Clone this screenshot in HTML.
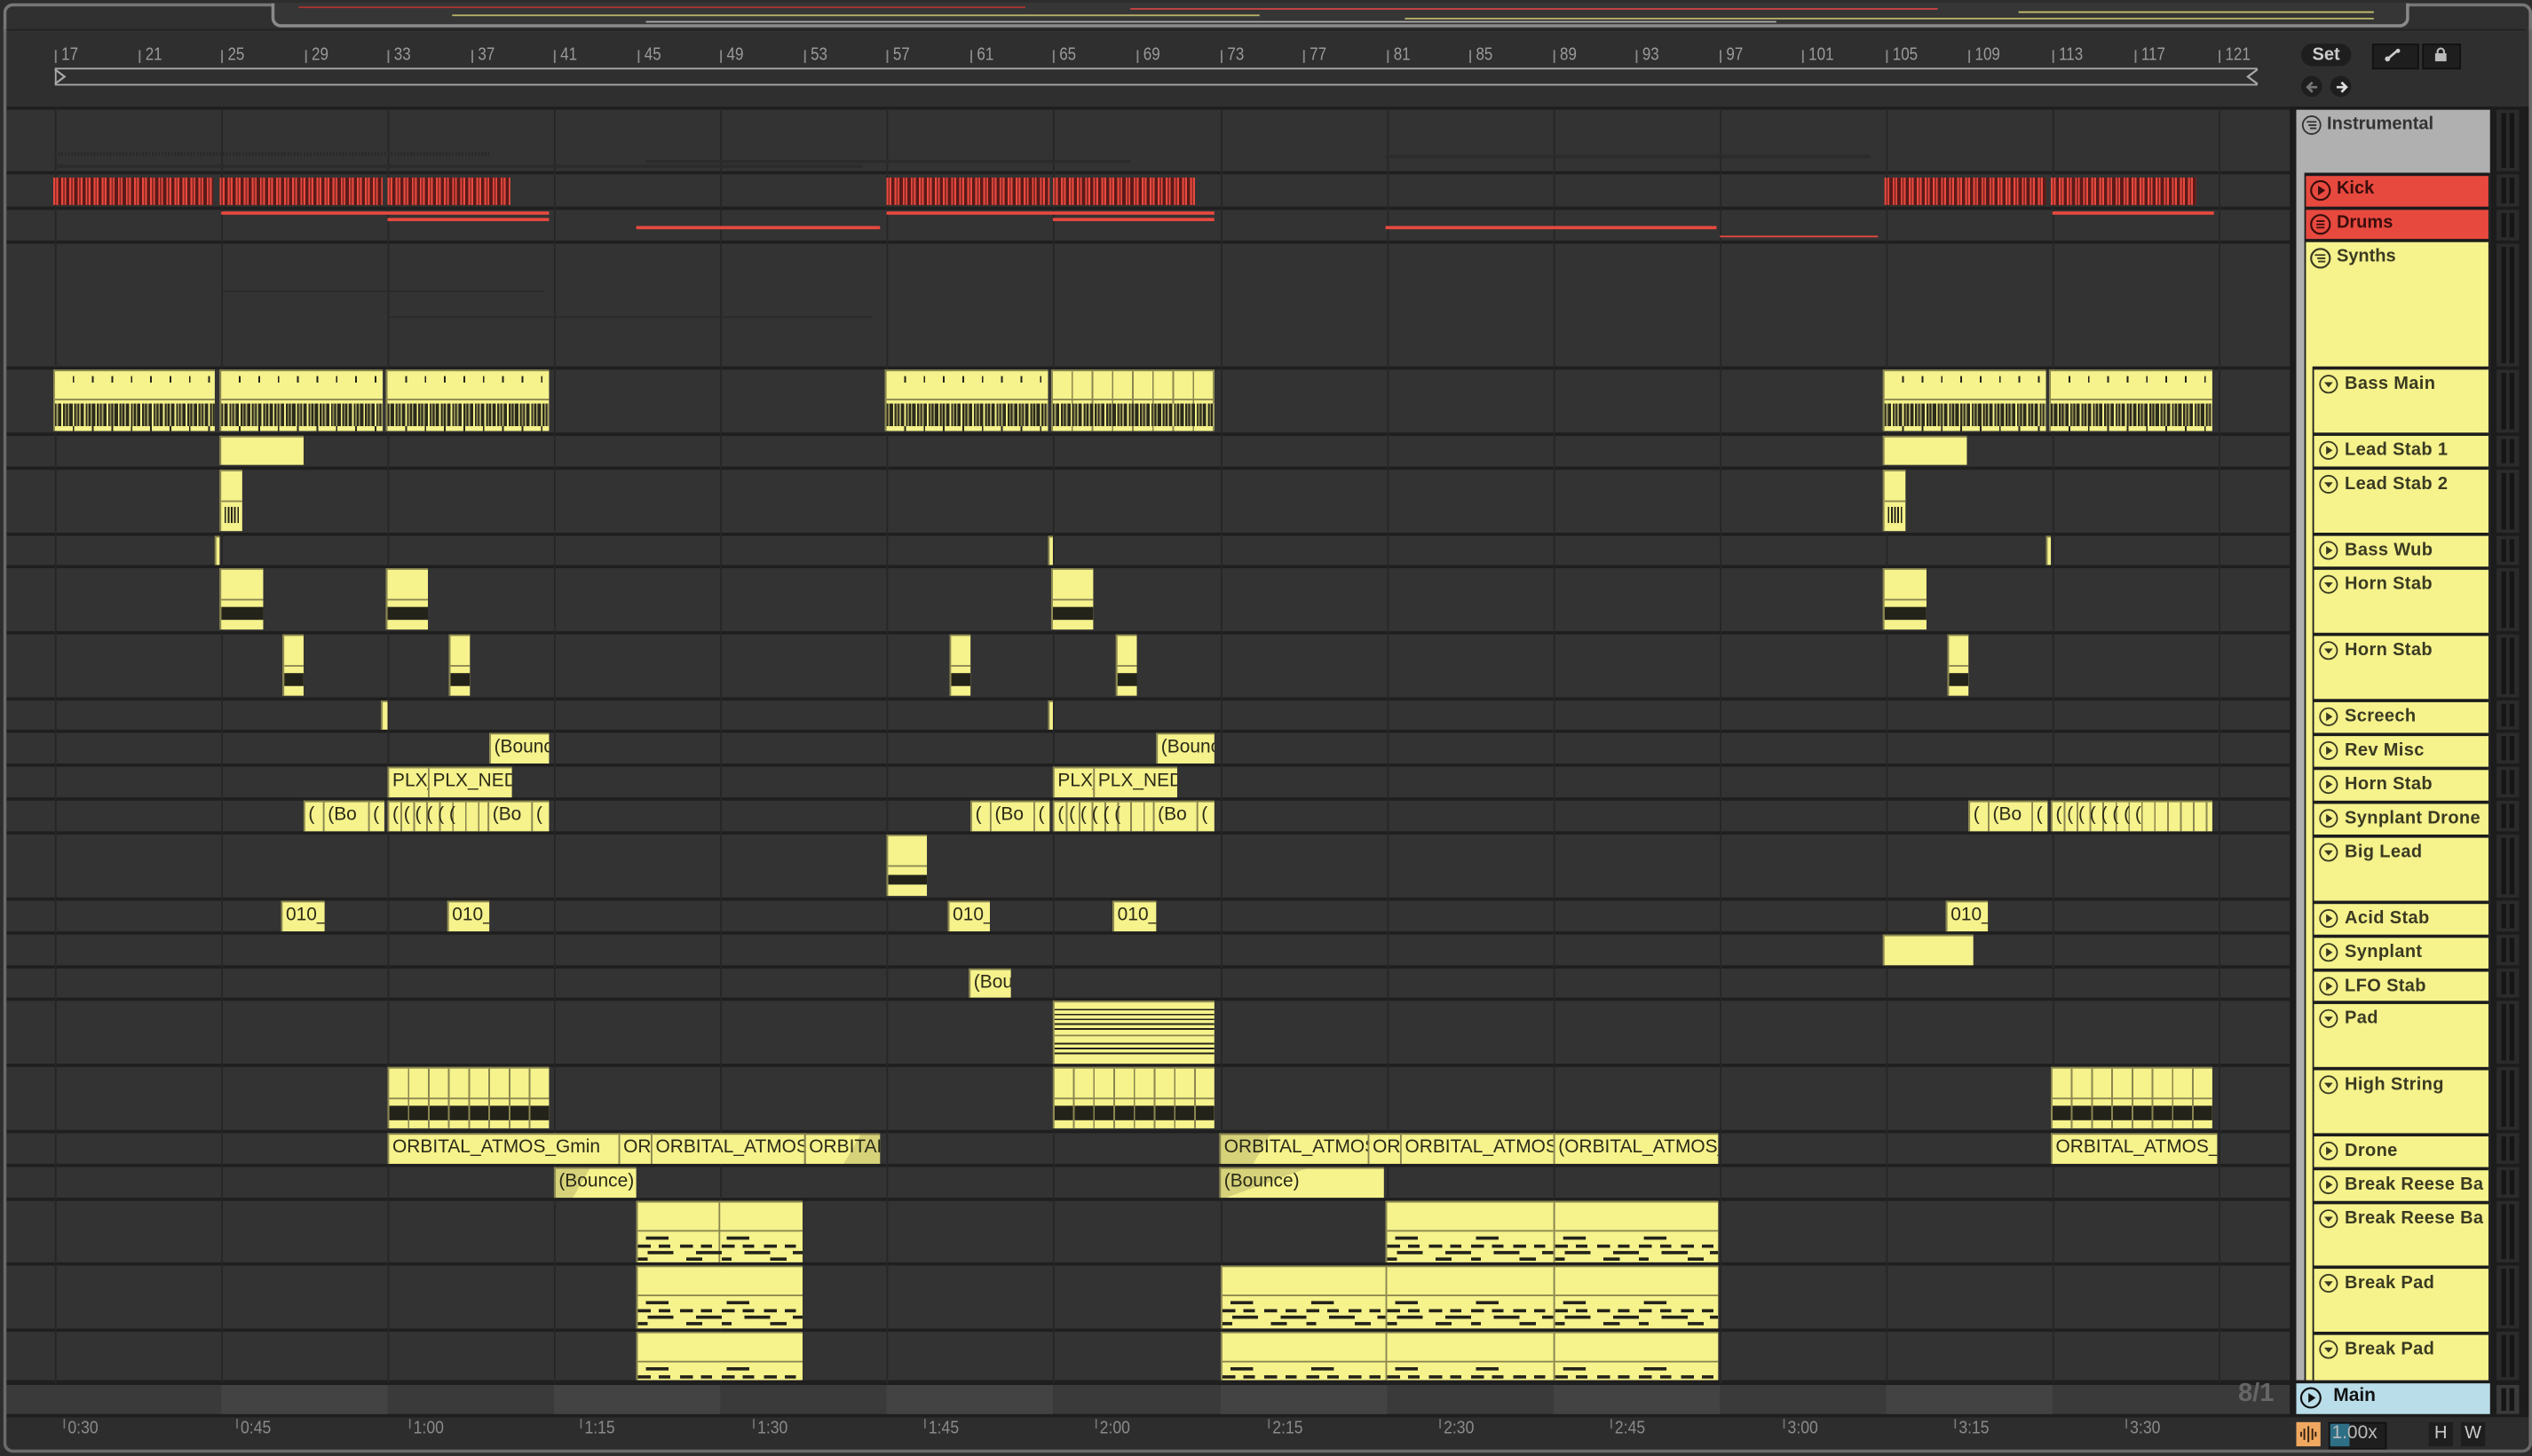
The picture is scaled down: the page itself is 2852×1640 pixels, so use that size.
<!DOCTYPE html>
<html><head><meta charset="utf-8"><style>
html,body{margin:0;padding:0;background:#2a2a2a;overflow:hidden}
#s{position:absolute;left:0;top:0;width:1568px;height:902px;transform:scale(1.8189,1.8182);transform-origin:0 0;background:#2d2d2d;font-family:"Liberation Sans",sans-serif;overflow:hidden}
.a{position:absolute}
.row{position:absolute;left:4px;width:1414px;background:#333}
.g{position:absolute;top:67px;width:1px;height:790px;background:#262626}
.rn{position:absolute;top:28px;font-size:11px;color:#9a9a9a;transform:scaleX(.85);transform-origin:0 0}
.rt{position:absolute;top:31px;width:1px;height:8px;background:#888}
.c{position:absolute;background:#f6f28c;border-left:1px solid #8a8650;border-top:1px solid #8a8650;box-sizing:border-box;overflow:hidden;white-space:nowrap;font-size:11.5px;color:#2a2a18;line-height:17px;padding-left:2px}
.k{position:absolute;background:repeating-linear-gradient(90deg,#e8493f 0 1px,#8a2a24 1px 2px,#e8493f 2px 3px,#5a1a18 3px 5px);}
.rl{position:absolute;height:2px;background:#e8493f}
.bm{position:absolute;left:0;right:0;top:20px;height:14px;background:repeating-linear-gradient(90deg,#2a2a1a 0 1px,#a8a468 1px 2px,#2a2a1a 2px 4px,#f6f28c 4px 5px,#2a2a1a 5px 6px,#8a8650 6px 7px)}
.dv{position:absolute;left:0;right:0;height:1px;background:#8a8650}
.bk{position:absolute;left:0;right:0;background:#23231a}
.tk{position:absolute;left:0;right:0;height:4px;background:repeating-linear-gradient(90deg,transparent 0 11px,#23231a 11px 12px)}
.nm{position:absolute;left:1433px;width:108px;background:#f6f28c;border-top:2px solid #1c1c1c;box-sizing:border-box;font-weight:bold;font-size:11px;color:#3a3a22;padding:3px 0 0 19px;letter-spacing:.2px}
.ic{position:absolute;left:3px;top:3px;width:12px;height:12px}
.m{position:absolute;left:1546px;width:14px;background:#2b2b2b}
.m:before,.m:after{content:"";position:absolute;top:2px;bottom:2px;width:3px;background:#161616}
.m:before{left:3px}.m:after{left:8px}
.tl{position:absolute;top:879px;font-size:11px;color:#8a8a8a;transform:scaleX(.88);transform-origin:0 0}
.tl:before{content:"";position:absolute;left:-3px;top:0;width:1px;height:6px;background:#777}
.notes{position:absolute;left:0;right:0;bottom:0;background:
linear-gradient(#23231a,#23231a) 5px 3px/14px 2px no-repeat,
linear-gradient(#23231a,#23231a) 55px 3px/14px 2px no-repeat,
repeating-linear-gradient(90deg,#23231a 0 8px,transparent 8px 13px,#23231a 13px 20px,transparent 20px 26px) 0 8px/100% 2px no-repeat,
repeating-linear-gradient(90deg,transparent 0 6px,#23231a 6px 22px,transparent 22px 30px) 0 12px/100% 2px no-repeat,
repeating-linear-gradient(90deg,#23231a 0 6px,transparent 6px 30px,#23231a 30px 40px,transparent 40px 52px) 0 16px/100% 2px no-repeat,
repeating-linear-gradient(90deg,#23231a 0 8px,transparent 8px 51px) 0 20px/100% 2px no-repeat}
.hs{position:absolute;left:0;right:0;top:0;bottom:0;background:repeating-linear-gradient(90deg,transparent 0 11.5px,#8a8650 11.5px 12.5px)}
</style></head><body><div id="s">

<div class="a" style="left:2px;top:2px;width:1562px;height:16px;border:2px solid #777;border-bottom:none;border-radius:6px 6px 0 0;background:#303030"></div>
<div class="a" style="left:168px;top:2px;width:1320px;height:13px;border:2px solid #8a8a8a;border-top:none;border-radius:0 0 6px 6px;background:#363636"></div>
<div class="a" style="left:185px;top:4px;width:450px;height:1px;background:#a33"></div>
<div class="a" style="left:280px;top:9px;width:500px;height:1px;background:#b8b46a"></div>
<div class="a" style="left:400px;top:13px;width:700px;height:1px;background:#aaa"></div>
<div class="a" style="left:700px;top:5px;width:500px;height:1px;background:#c44"></div>
<div class="a" style="left:870px;top:11px;width:600px;height:1px;background:#b8b46a"></div>
<div class="a" style="left:1250px;top:7px;width:220px;height:1px;background:#c6c270"></div>
<div class="a" style="left:4px;top:18px;width:1560px;height:1px;background:#222"></div>

<div class="a" style="left:4px;top:20px;width:1414px;height:46px;background:#2f2f2f"></div>
<div class="a" style="left:34px;top:42px;width:1364px;height:9px;border-top:1px solid #aaa;border-bottom:1px solid #aaa"></div>
<div class="a" style="left:34px;top:42px;width:1px;height:10px;background:#aaa"></div>
<svg class="a" style="left:33px;top:42px" width="10" height="11"><path d="M1 1 L7 5.5 L1 10" fill="none" stroke="#aaa" stroke-width="1.2"/></svg>
<svg class="a" style="left:1390px;top:42px" width="10" height="11"><path d="M8 1 L2 5.5 L8 10" fill="none" stroke="#aaa" stroke-width="1.2"/></svg>
<div class="rt" style="left:34px"></div><div class="rn" style="left:38px">17</div>
<div class="rt" style="left:86px"></div><div class="rn" style="left:90px">21</div>
<div class="rt" style="left:137px"></div><div class="rn" style="left:141px">25</div>
<div class="rt" style="left:189px"></div><div class="rn" style="left:193px">29</div>
<div class="rt" style="left:240px"></div><div class="rn" style="left:244px">33</div>
<div class="rt" style="left:292px"></div><div class="rn" style="left:296px">37</div>
<div class="rt" style="left:343px"></div><div class="rn" style="left:347px">41</div>
<div class="rt" style="left:395px"></div><div class="rn" style="left:399px">45</div>
<div class="rt" style="left:446px"></div><div class="rn" style="left:450px">49</div>
<div class="rt" style="left:498px"></div><div class="rn" style="left:502px">53</div>
<div class="rt" style="left:549px"></div><div class="rn" style="left:553px">57</div>
<div class="rt" style="left:601px"></div><div class="rn" style="left:605px">61</div>
<div class="rt" style="left:652px"></div><div class="rn" style="left:656px">65</div>
<div class="rt" style="left:704px"></div><div class="rn" style="left:708px">69</div>
<div class="rt" style="left:756px"></div><div class="rn" style="left:760px">73</div>
<div class="rt" style="left:807px"></div><div class="rn" style="left:811px">77</div>
<div class="rt" style="left:859px"></div><div class="rn" style="left:863px">81</div>
<div class="rt" style="left:910px"></div><div class="rn" style="left:914px">85</div>
<div class="rt" style="left:962px"></div><div class="rn" style="left:966px">89</div>
<div class="rt" style="left:1013px"></div><div class="rn" style="left:1017px">93</div>
<div class="rt" style="left:1065px"></div><div class="rn" style="left:1069px">97</div>
<div class="rt" style="left:1116px"></div><div class="rn" style="left:1120px">101</div>
<div class="rt" style="left:1168px"></div><div class="rn" style="left:1172px">105</div>
<div class="rt" style="left:1219px"></div><div class="rn" style="left:1223px">109</div>
<div class="rt" style="left:1271px"></div><div class="rn" style="left:1275px">113</div>
<div class="rt" style="left:1322px"></div><div class="rn" style="left:1326px">117</div>
<div class="rt" style="left:1374px"></div><div class="rn" style="left:1378px">121</div>

<div class="a" style="left:4px;top:66px;width:1414px;height:812px;background:#1f1f1f"></div>
<div class="row" style="top:68px;height:38px"></div>
<div class="row" style="top:108px;height:20px"></div>
<div class="row" style="top:130px;height:19px"></div>
<div class="row" style="top:151px;height:76px"></div>
<div class="row" style="top:229px;height:39px"></div>
<div class="row" style="top:270px;height:19px"></div>
<div class="row" style="top:291px;height:39px"></div>
<div class="row" style="top:332px;height:18px"></div>
<div class="row" style="top:352px;height:39px"></div>
<div class="row" style="top:393px;height:39px"></div>
<div class="row" style="top:434px;height:18px"></div>
<div class="row" style="top:454px;height:19px"></div>
<div class="row" style="top:475px;height:19px"></div>
<div class="row" style="top:496px;height:19px"></div>
<div class="row" style="top:517px;height:39px"></div>
<div class="row" style="top:558px;height:19px"></div>
<div class="row" style="top:579px;height:19px"></div>
<div class="row" style="top:600px;height:18px"></div>
<div class="row" style="top:620px;height:39px"></div>
<div class="row" style="top:661px;height:39px"></div>
<div class="row" style="top:702px;height:19px"></div>
<div class="row" style="top:723px;height:19px"></div>
<div class="row" style="top:744px;height:38px"></div>
<div class="row" style="top:784px;height:39px"></div>
<div class="row" style="top:825px;height:30px"></div>
<div class="row" style="top:858px;height:18px;background:#3a3a3a"></div>
<div class="a" style="left:137px;top:858px;width:103px;height:18px;background:#434343"></div>
<div class="a" style="left:343px;top:858px;width:103px;height:18px;background:#434343"></div>
<div class="a" style="left:549px;top:858px;width:103px;height:18px;background:#434343"></div>
<div class="a" style="left:756px;top:858px;width:103px;height:18px;background:#434343"></div>
<div class="a" style="left:962px;top:858px;width:103px;height:18px;background:#434343"></div>
<div class="a" style="left:1168px;top:858px;width:103px;height:18px;background:#434343"></div>

<div class="g" style="left:34px"></div><div class="g" style="left:137px"></div><div class="g" style="left:240px"></div><div class="g" style="left:343px"></div><div class="g" style="left:446px"></div><div class="g" style="left:549px"></div><div class="g" style="left:652px"></div><div class="g" style="left:756px"></div><div class="g" style="left:859px"></div><div class="g" style="left:962px"></div><div class="g" style="left:1065px"></div><div class="g" style="left:1168px"></div><div class="g" style="left:1271px"></div><div class="g" style="left:1374px"></div>

<div class="a" style="left:34px;top:94px;width:270px;height:3px;background:repeating-linear-gradient(90deg,#2a2a2a 0 1px,transparent 1px 2px)"></div>
<div class="a" style="left:34px;top:102px;width:500px;height:2px;background:#2b2b2b"></div>
<div class="a" style="left:400px;top:99px;width:300px;height:2px;background:#2b2b2b"></div>
<div class="a" style="left:858px;top:96px;width:300px;height:2px;background:#2b2b2b"></div>
<div class="a" style="left:137px;top:180px;width:200px;height:1px;background:#2a2a2a"></div>
<div class="a" style="left:240px;top:196px;width:300px;height:1px;background:#2a2a2a"></div>

<div class="k" style="left:33px;top:110px;width:99px;height:17px"></div>
<div class="k" style="left:136px;top:110px;width:101px;height:17px"></div>
<div class="k" style="left:240px;top:110px;width:76px;height:17px"></div>
<div class="k" style="left:549px;top:110px;width:101px;height:17px"></div>
<div class="k" style="left:652px;top:110px;width:88px;height:17px"></div>
<div class="k" style="left:1167px;top:110px;width:100px;height:17px"></div>
<div class="k" style="left:1270px;top:110px;width:90px;height:17px"></div>
<div class="rl" style="left:137px;top:131px;width:203px"></div>
<div class="rl" style="left:240px;top:135px;width:100px"></div>
<div class="rl" style="left:394px;top:140px;width:151px"></div>
<div class="rl" style="left:549px;top:131px;width:203px"></div>
<div class="rl" style="left:652px;top:135px;width:100px"></div>
<div class="rl" style="left:858px;top:140px;width:205px"></div>
<div class="rl" style="left:1065px;top:146px;width:98px;height:1px"></div>
<div class="rl" style="left:1271px;top:131px;width:100px"></div>

<div class="c" style="left:33px;top:229px;width:100px;height:38px"><div class="tk" style="top:3px"></div><div class="dv" style="top:17px"></div><div class="bm"></div><div class="tk" style="top:34px"></div></div>
<div class="c" style="left:136px;top:229px;width:101px;height:38px"><div class="tk" style="top:3px"></div><div class="dv" style="top:17px"></div><div class="bm"></div><div class="tk" style="top:34px"></div></div>
<div class="c" style="left:239px;top:229px;width:101px;height:38px"><div class="tk" style="top:3px"></div><div class="dv" style="top:17px"></div><div class="bm"></div><div class="tk" style="top:34px"></div></div>
<div class="c" style="left:548px;top:229px;width:101px;height:38px"><div class="tk" style="top:3px"></div><div class="dv" style="top:17px"></div><div class="bm"></div><div class="tk" style="top:34px"></div></div>
<div class="c" style="left:651px;top:229px;width:101px;height:38px"><div class="hs"></div><div class="dv" style="top:17px"></div><div class="bm"></div></div>
<div class="c" style="left:1166px;top:229px;width:101px;height:38px"><div class="tk" style="top:3px"></div><div class="dv" style="top:17px"></div><div class="bm"></div><div class="tk" style="top:34px"></div></div>
<div class="c" style="left:1269px;top:229px;width:101px;height:38px"><div class="tk" style="top:3px"></div><div class="dv" style="top:17px"></div><div class="bm"></div><div class="tk" style="top:34px"></div></div>

<div class="c" style="left:136px;top:270px;width:52px;height:18px"></div>
<div class="c" style="left:1166px;top:270px;width:52px;height:18px"></div>
<div class="c" style="left:136px;top:291px;width:14px;height:38px"><div class="dv" style="top:18px"></div><div class="a" style="left:2px;top:22px;width:10px;height:10px;background:repeating-linear-gradient(90deg,#23231a 0 1px,transparent 1px 2px)"></div></div>
<div class="c" style="left:1166px;top:291px;width:14px;height:38px"><div class="dv" style="top:18px"></div><div class="a" style="left:2px;top:22px;width:10px;height:10px;background:repeating-linear-gradient(90deg,#23231a 0 1px,transparent 1px 2px)"></div></div>
<div class="c" style="left:133px;top:332px;width:3px;height:18px;padding:0"></div>
<div class="c" style="left:649px;top:332px;width:3px;height:18px;padding:0"></div>
<div class="c" style="left:1267px;top:332px;width:3px;height:18px;padding:0"></div>
<div class="c" style="left:136px;top:352px;width:27px;height:38px"><div class="dv" style="top:18px"></div><div class="bk" style="top:23px;height:8px"></div></div>
<div class="c" style="left:239px;top:352px;width:26px;height:38px"><div class="dv" style="top:18px"></div><div class="bk" style="top:23px;height:8px"></div></div>
<div class="c" style="left:651px;top:352px;width:26px;height:38px"><div class="dv" style="top:18px"></div><div class="bk" style="top:23px;height:8px"></div></div>
<div class="c" style="left:1166px;top:352px;width:27px;height:38px"><div class="dv" style="top:18px"></div><div class="bk" style="top:23px;height:8px"></div></div>
<div class="c" style="left:175px;top:393px;width:13px;height:38px"><div class="dv" style="top:18px"></div><div class="bk" style="top:23px;height:8px"></div></div>
<div class="c" style="left:278px;top:393px;width:13px;height:38px"><div class="dv" style="top:18px"></div><div class="bk" style="top:23px;height:8px"></div></div>
<div class="c" style="left:588px;top:393px;width:13px;height:38px"><div class="dv" style="top:18px"></div><div class="bk" style="top:23px;height:8px"></div></div>
<div class="c" style="left:691px;top:393px;width:13px;height:38px"><div class="dv" style="top:18px"></div><div class="bk" style="top:23px;height:8px"></div></div>
<div class="c" style="left:1206px;top:393px;width:13px;height:38px"><div class="dv" style="top:18px"></div><div class="bk" style="top:23px;height:8px"></div></div>
<div class="c" style="left:236px;top:434px;width:4px;height:18px;padding:0"></div>
<div class="c" style="left:649px;top:434px;width:3px;height:18px;padding:0"></div>
<div class="c" style="left:303px;top:454px;width:37px;height:19px">(Bounce)</div>
<div class="c" style="left:716px;top:454px;width:36px;height:19px">(Bounce)</div>
<div class="c" style="left:240px;top:475px;width:25px;height:19px">PLX_</div>
<div class="c" style="left:265px;top:475px;width:52px;height:19px">PLX_NED</div>
<div class="c" style="left:652px;top:475px;width:25px;height:19px">PLX_</div>
<div class="c" style="left:677px;top:475px;width:52px;height:19px">PLX_NED</div>
<div class="c" style="left:188px;top:496px;width:12px;height:19px">(</div>
<div class="c" style="left:200px;top:496px;width:28px;height:19px">(Bo</div>
<div class="c" style="left:228px;top:496px;width:10px;height:19px">(</div>
<div class="c" style="left:240px;top:496px;width:62px;height:19px;background:#f6f28c repeating-linear-gradient(90deg,transparent 0 7px,#8a8650 7px 8px)">( ( ( ( ( (</div>
<div class="c" style="left:302px;top:496px;width:27px;height:19px">(Bo</div>
<div class="c" style="left:329px;top:496px;width:11px;height:19px">(</div>
<div class="c" style="left:601px;top:496px;width:12px;height:19px">(</div>
<div class="c" style="left:613px;top:496px;width:27px;height:19px">(Bo</div>
<div class="c" style="left:640px;top:496px;width:10px;height:19px">(</div>
<div class="c" style="left:652px;top:496px;width:62px;height:19px;background:#f6f28c repeating-linear-gradient(90deg,transparent 0 7px,#8a8650 7px 8px)">( ( ( ( ( (</div>
<div class="c" style="left:714px;top:496px;width:27px;height:19px">(Bo</div>
<div class="c" style="left:741px;top:496px;width:11px;height:19px">(</div>
<div class="c" style="left:1219px;top:496px;width:12px;height:19px">(</div>
<div class="c" style="left:1231px;top:496px;width:27px;height:19px">(Bo</div>
<div class="c" style="left:1258px;top:496px;width:10px;height:19px">(</div>
<div class="c" style="left:1270px;top:496px;width:100px;height:19px;background:#f6f28c repeating-linear-gradient(90deg,transparent 0 7px,#8a8650 7px 8px)">( ( ( ( ( ( ( (</div>
<div class="c" style="left:549px;top:517px;width:25px;height:38px"><div class="dv" style="top:18px"></div><div class="bk" style="top:24px;height:6px"></div></div>
<div class="c" style="left:174px;top:558px;width:27px;height:19px">010_</div>
<div class="c" style="left:277px;top:558px;width:26px;height:19px">010_</div>
<div class="c" style="left:587px;top:558px;width:26px;height:19px">010_</div>
<div class="c" style="left:689px;top:558px;width:27px;height:19px">010_</div>
<div class="c" style="left:1205px;top:558px;width:26px;height:19px">010_</div>
<div class="c" style="left:1166px;top:579px;width:56px;height:19px"></div>
<div class="c" style="left:600px;top:600px;width:26px;height:18px">(Bounce)</div>
<div class="c" style="left:652px;top:620px;width:100px;height:39px"><div class="a" style="left:0;right:0;top:4px;height:14px;background:repeating-linear-gradient(180deg,#23231a 0 1px,transparent 1px 3px)"></div><div class="dv" style="top:20px"></div><div class="a" style="left:0;right:0;top:25px;height:8px;background:repeating-linear-gradient(180deg,#23231a 0 1px,transparent 1px 3px)"></div></div>
<div class="c" style="left:240px;top:661px;width:100px;height:38px"><div class="hs"></div><div class="dv" style="top:18px"></div><div class="bk" style="top:23px;height:9px;background:repeating-linear-gradient(90deg,#23231a 0 11.5px,#8a8650 11.5px 12.5px)"></div></div>
<div class="c" style="left:652px;top:661px;width:100px;height:38px"><div class="hs"></div><div class="dv" style="top:18px"></div><div class="bk" style="top:23px;height:9px;background:repeating-linear-gradient(90deg,#23231a 0 11.5px,#8a8650 11.5px 12.5px)"></div></div>
<div class="c" style="left:1270px;top:661px;width:100px;height:38px"><div class="hs"></div><div class="dv" style="top:18px"></div><div class="bk" style="top:23px;height:9px;background:repeating-linear-gradient(90deg,#23231a 0 11.5px,#8a8650 11.5px 12.5px)"></div></div>
<div class="c" style="left:240px;top:702px;width:143px;height:19px">ORBITAL_ATMOS_Gmin</div>
<div class="c" style="left:383px;top:702px;width:20px;height:19px">OR</div>
<div class="c" style="left:403px;top:702px;width:95px;height:19px">ORBITAL_ATMOS_</div>
<div class="c" style="left:498px;top:702px;width:47px;height:19px;background:linear-gradient(120deg,#f6f28c 60%,#d6d27a 60%)">ORBITAL_</div>
<div class="c" style="left:755px;top:702px;width:92px;height:19px;background:linear-gradient(120deg,#d6d27a 30%,#f6f28c 30%)">ORBITAL_ATMOS</div>
<div class="c" style="left:847px;top:702px;width:20px;height:19px">OR</div>
<div class="c" style="left:867px;top:702px;width:95px;height:19px">ORBITAL_ATMOS_</div>
<div class="c" style="left:962px;top:702px;width:102px;height:19px">(ORBITAL_ATMOS_</div>
<div class="c" style="left:1270px;top:702px;width:103px;height:19px">ORBITAL_ATMOS_G</div>
<div class="c" style="left:343px;top:723px;width:51px;height:19px;background:linear-gradient(120deg,#d6d27a 35%,#f6f28c 35%)">(Bounce)</div>
<div class="c" style="left:755px;top:723px;width:102px;height:19px;background:linear-gradient(160deg,#d6d27a 35%,#f6f28c 35%)">(Bounce)</div>
<div class="c" style="left:394px;top:744px;width:103px;height:38px"><div class="dv" style="top:17px"></div><div class="a" style="left:50px;top:0;width:1px;height:38px;background:#8a8650"></div><div class="notes" style="top:18px"></div></div>
<div class="c" style="left:858px;top:744px;width:104px;height:38px"><div class="dv" style="top:17px"></div><div class="notes" style="top:18px"></div></div>
<div class="c" style="left:962px;top:744px;width:102px;height:38px"><div class="dv" style="top:17px"></div><div class="notes" style="top:18px"></div></div>
<div class="c" style="left:394px;top:784px;width:103px;height:39px"><div class="dv" style="top:17px"></div><div class="notes" style="top:18px"></div></div>
<div class="c" style="left:756px;top:784px;width:102px;height:39px"><div class="dv" style="top:17px"></div><div class="notes" style="top:18px"></div></div>
<div class="c" style="left:858px;top:784px;width:104px;height:39px"><div class="dv" style="top:17px"></div><div class="notes" style="top:18px"></div></div>
<div class="c" style="left:962px;top:784px;width:102px;height:39px"><div class="dv" style="top:17px"></div><div class="notes" style="top:18px"></div></div>
<div class="c" style="left:394px;top:825px;width:103px;height:30px"><div class="dv" style="top:17px"></div><div class="notes" style="top:18px"></div></div>
<div class="c" style="left:756px;top:825px;width:102px;height:30px"><div class="dv" style="top:17px"></div><div class="notes" style="top:18px"></div></div>
<div class="c" style="left:858px;top:825px;width:104px;height:30px"><div class="dv" style="top:17px"></div><div class="notes" style="top:18px"></div></div>
<div class="c" style="left:962px;top:825px;width:102px;height:30px"><div class="dv" style="top:17px"></div><div class="notes" style="top:18px"></div></div>

<div class="a" style="left:4px;top:877px;width:1414px;height:1px;background:#1f1f1f"></div>
<div class="tl" style="left:42px">0:30</div><div class="tl" style="left:149px">0:45</div><div class="tl" style="left:256px">1:00</div><div class="tl" style="left:362px">1:15</div><div class="tl" style="left:469px">1:30</div><div class="tl" style="left:575px">1:45</div><div class="tl" style="left:681px">2:00</div><div class="tl" style="left:788px">2:15</div><div class="tl" style="left:894px">2:30</div><div class="tl" style="left:1000px">2:45</div><div class="tl" style="left:1107px">3:00</div><div class="tl" style="left:1213px">3:15</div><div class="tl" style="left:1319px">3:30</div>
<div class="a" style="left:1386px;top:855px;font-size:16px;font-weight:bold;color:#666">8/1</div>

<div class="a" style="left:1418px;top:20px;width:148px;height:46px;background:#2f2f2f"></div>
<div class="a" style="left:1425px;top:27px;width:31px;height:14px;background:#1e1e1e;border-radius:7px;color:#ccc;font-size:11px;text-align:center;line-height:14px;font-weight:bold">Set</div>
<div class="a" style="left:1469px;top:27px;width:27px;height:14px;background:#1e1e1e;border:1px solid #111"></div>
<svg class="a" style="left:1476px;top:29px" width="12" height="10"><path d="M2 8 L9 2" stroke="#ccc" stroke-width="1.5"/><circle cx="2.5" cy="7.5" r="1.6" fill="#ccc"/><circle cx="9" cy="2.5" r="1.3" fill="#ccc"/></svg>
<div class="a" style="left:1500px;top:27px;width:22px;height:14px;background:#1e1e1e;border:1px solid #111"></div>
<svg class="a" style="left:1505px;top:29px" width="12" height="10"><rect x="3" y="4" width="7" height="5" fill="#bbb"/><path d="M4.5 4.5 V3 a2 2 0 0 1 4 0 V4.5" fill="none" stroke="#bbb" stroke-width="1.2"/></svg>
<div class="a" style="left:1425px;top:47px;width:13px;height:13px;border-radius:7px;background:#1e1e1e"></div>
<div class="a" style="left:1443px;top:47px;width:13px;height:13px;border-radius:7px;background:#1e1e1e"></div>
<svg class="a" style="left:1427px;top:49px" width="10" height="10"><path d="M8 5 H2 M5 2 L2 5 L5 8" fill="none" stroke="#777" stroke-width="1.5"/></svg>
<svg class="a" style="left:1445px;top:49px" width="10" height="10"><path d="M2 5 H8 M5 2 L8 5 L5 8" fill="none" stroke="#ddd" stroke-width="1.5"/></svg>

<div class="a" style="left:1418px;top:66px;width:148px;height:812px;background:#1c1c1c"></div>
<div class="a" style="left:1422px;top:68px;width:120px;height:787px;background:#b0b0b0"></div>
<div class="a" style="left:1441px;top:71px;font-size:11px;font-weight:bold;color:#333">Instrumental</div>
<svg class="a" style="left:1425px;top:71px" width="13" height="13"><circle cx="6.5" cy="6.5" r="5.5" fill="none" stroke="#333" stroke-width="1"/><path d="M3.5 4.5 H9.5 M4.5 6.5 H9.5 M5.5 8.5 H9.5" stroke="#333" stroke-width="1"/></svg>
<div class="a" style="left:1427px;top:107px;width:115px;height:748px;background:#1c1c1c"></div>
<div class="a" style="left:1428px;top:109px;width:113px;height:19px;background:#e8493f"></div>
<div class="a" style="left:1447px;top:111px;font-size:11px;font-weight:bold;color:#3a0e0c">Kick</div>
<svg class="a" style="left:1430px;top:111px" width="14" height="14"><circle cx="7" cy="7" r="5.8" fill="none" stroke="#3a0e0c" stroke-width="1.2"/><path d="M5.5 4 L10 7 L5.5 10Z" fill="#3a0e0c"/></svg>
<div class="a" style="left:1428px;top:130px;width:113px;height:18px;background:#e8493f"></div>
<div class="a" style="left:1447px;top:132px;font-size:11px;font-weight:bold;color:#3a0e0c">Drums</div>
<svg class="a" style="left:1430px;top:132px" width="14" height="14"><circle cx="7" cy="7" r="5.8" fill="none" stroke="#3a0e0c" stroke-width="1.2"/><path d="M4.5 5 H9.5 M4.5 7 H9.5 M4.5 9 H9.5" stroke="#3a0e0c" stroke-width="1"/></svg>
<div class="a" style="left:1428px;top:150px;width:113px;height:705px;background:#f6f28c"></div>
<div class="a" style="left:1447px;top:153px;font-size:11px;font-weight:bold;color:#3a3a22">Synths</div>
<svg class="a" style="left:1430px;top:153px" width="14" height="14"><circle cx="7" cy="7" r="5.8" fill="none" stroke="#3a3a22" stroke-width="1.2"/><path d="M3.5 5 H10 M5 7 H10 M5.5 9 H10" stroke="#3a3a22" stroke-width="1"/></svg>
<div class="a" style="left:1432px;top:227px;width:1px;height:628px;background:#1c1c1c"></div>

<div class="nm" style="top:227px;height:41px">Bass Main<svg class="ic" viewBox="0 0 12 12"><circle cx="6" cy="6" r="5.3" fill="none" stroke="#3a3a22" stroke-width="1"/><path d="M3.3 4.8 H8.7 L6 8Z" fill="#3a3a22"/></svg></div>
<div class="nm" style="top:268px;height:21px">Lead Stab 1<svg class="ic" viewBox="0 0 12 12"><circle cx="6" cy="6" r="5.3" fill="none" stroke="#3a3a22" stroke-width="1"/><path d="M4.5 3.3 V8.7 L8.5 6Z" fill="#3a3a22"/></svg></div>
<div class="nm" style="top:289px;height:41px">Lead Stab 2<svg class="ic" viewBox="0 0 12 12"><circle cx="6" cy="6" r="5.3" fill="none" stroke="#3a3a22" stroke-width="1"/><path d="M3.3 4.8 H8.7 L6 8Z" fill="#3a3a22"/></svg></div>
<div class="nm" style="top:330px;height:21px">Bass Wub<svg class="ic" viewBox="0 0 12 12"><circle cx="6" cy="6" r="5.3" fill="none" stroke="#3a3a22" stroke-width="1"/><path d="M4.5 3.3 V8.7 L8.5 6Z" fill="#3a3a22"/></svg></div>
<div class="nm" style="top:351px;height:41px">Horn Stab<svg class="ic" viewBox="0 0 12 12"><circle cx="6" cy="6" r="5.3" fill="none" stroke="#3a3a22" stroke-width="1"/><path d="M3.3 4.8 H8.7 L6 8Z" fill="#3a3a22"/></svg></div>
<div class="nm" style="top:392px;height:41px">Horn Stab<svg class="ic" viewBox="0 0 12 12"><circle cx="6" cy="6" r="5.3" fill="none" stroke="#3a3a22" stroke-width="1"/><path d="M3.3 4.8 H8.7 L6 8Z" fill="#3a3a22"/></svg></div>
<div class="nm" style="top:433px;height:21px">Screech<svg class="ic" viewBox="0 0 12 12"><circle cx="6" cy="6" r="5.3" fill="none" stroke="#3a3a22" stroke-width="1"/><path d="M4.5 3.3 V8.7 L8.5 6Z" fill="#3a3a22"/></svg></div>
<div class="nm" style="top:454px;height:21px">Rev Misc<svg class="ic" viewBox="0 0 12 12"><circle cx="6" cy="6" r="5.3" fill="none" stroke="#3a3a22" stroke-width="1"/><path d="M4.5 3.3 V8.7 L8.5 6Z" fill="#3a3a22"/></svg></div>
<div class="nm" style="top:475px;height:21px">Horn Stab<svg class="ic" viewBox="0 0 12 12"><circle cx="6" cy="6" r="5.3" fill="none" stroke="#3a3a22" stroke-width="1"/><path d="M4.5 3.3 V8.7 L8.5 6Z" fill="#3a3a22"/></svg></div>
<div class="nm" style="top:496px;height:21px">Synplant Drone<svg class="ic" viewBox="0 0 12 12"><circle cx="6" cy="6" r="5.3" fill="none" stroke="#3a3a22" stroke-width="1"/><path d="M4.5 3.3 V8.7 L8.5 6Z" fill="#3a3a22"/></svg></div>
<div class="nm" style="top:517px;height:41px">Big Lead<svg class="ic" viewBox="0 0 12 12"><circle cx="6" cy="6" r="5.3" fill="none" stroke="#3a3a22" stroke-width="1"/><path d="M3.3 4.8 H8.7 L6 8Z" fill="#3a3a22"/></svg></div>
<div class="nm" style="top:558px;height:21px">Acid Stab<svg class="ic" viewBox="0 0 12 12"><circle cx="6" cy="6" r="5.3" fill="none" stroke="#3a3a22" stroke-width="1"/><path d="M4.5 3.3 V8.7 L8.5 6Z" fill="#3a3a22"/></svg></div>
<div class="nm" style="top:579px;height:21px">Synplant<svg class="ic" viewBox="0 0 12 12"><circle cx="6" cy="6" r="5.3" fill="none" stroke="#3a3a22" stroke-width="1"/><path d="M4.5 3.3 V8.7 L8.5 6Z" fill="#3a3a22"/></svg></div>
<div class="nm" style="top:600px;height:20px">LFO Stab<svg class="ic" viewBox="0 0 12 12"><circle cx="6" cy="6" r="5.3" fill="none" stroke="#3a3a22" stroke-width="1"/><path d="M4.5 3.3 V8.7 L8.5 6Z" fill="#3a3a22"/></svg></div>
<div class="nm" style="top:620px;height:41px">Pad<svg class="ic" viewBox="0 0 12 12"><circle cx="6" cy="6" r="5.3" fill="none" stroke="#3a3a22" stroke-width="1"/><path d="M3.3 4.8 H8.7 L6 8Z" fill="#3a3a22"/></svg></div>
<div class="nm" style="top:661px;height:41px">High String<svg class="ic" viewBox="0 0 12 12"><circle cx="6" cy="6" r="5.3" fill="none" stroke="#3a3a22" stroke-width="1"/><path d="M3.3 4.8 H8.7 L6 8Z" fill="#3a3a22"/></svg></div>
<div class="nm" style="top:702px;height:21px">Drone<svg class="ic" viewBox="0 0 12 12"><circle cx="6" cy="6" r="5.3" fill="none" stroke="#3a3a22" stroke-width="1"/><path d="M4.5 3.3 V8.7 L8.5 6Z" fill="#3a3a22"/></svg></div>
<div class="nm" style="top:723px;height:21px">Break Reese Ba<svg class="ic" viewBox="0 0 12 12"><circle cx="6" cy="6" r="5.3" fill="none" stroke="#3a3a22" stroke-width="1"/><path d="M4.5 3.3 V8.7 L8.5 6Z" fill="#3a3a22"/></svg></div>
<div class="nm" style="top:744px;height:40px">Break Reese Ba<svg class="ic" viewBox="0 0 12 12"><circle cx="6" cy="6" r="5.3" fill="none" stroke="#3a3a22" stroke-width="1"/><path d="M3.3 4.8 H8.7 L6 8Z" fill="#3a3a22"/></svg></div>
<div class="nm" style="top:784px;height:41px">Break Pad<svg class="ic" viewBox="0 0 12 12"><circle cx="6" cy="6" r="5.3" fill="none" stroke="#3a3a22" stroke-width="1"/><path d="M3.3 4.8 H8.7 L6 8Z" fill="#3a3a22"/></svg></div>
<div class="nm" style="top:825px;height:30px">Break Pad<svg class="ic" viewBox="0 0 12 12"><circle cx="6" cy="6" r="5.3" fill="none" stroke="#3a3a22" stroke-width="1"/><path d="M3.3 4.8 H8.7 L6 8Z" fill="#3a3a22"/></svg></div>

<div class="a" style="left:1422px;top:857px;width:120px;height:19px;background:#b9dde9"></div>
<div class="a" style="left:1445px;top:859px;font-size:11.5px;font-weight:bold;color:#111">Main</div>
<svg class="a" style="left:1424px;top:859px" width="15" height="15"><circle cx="7" cy="7" r="6" fill="none" stroke="#111" stroke-width="1.2"/><path d="M5.5 4 L10 7 L5.5 10Z" fill="#111"/></svg>

<div class="m" style="top:68px;height:38px"></div>
<div class="m" style="top:108px;height:20px"></div>
<div class="m" style="top:130px;height:19px"></div>
<div class="m" style="top:151px;height:76px"></div>
<div class="m" style="top:229px;height:39px"></div>
<div class="m" style="top:270px;height:19px"></div>
<div class="m" style="top:291px;height:39px"></div>
<div class="m" style="top:332px;height:18px"></div>
<div class="m" style="top:352px;height:39px"></div>
<div class="m" style="top:393px;height:39px"></div>
<div class="m" style="top:434px;height:18px"></div>
<div class="m" style="top:454px;height:19px"></div>
<div class="m" style="top:475px;height:19px"></div>
<div class="m" style="top:496px;height:19px"></div>
<div class="m" style="top:517px;height:39px"></div>
<div class="m" style="top:558px;height:19px"></div>
<div class="m" style="top:579px;height:19px"></div>
<div class="m" style="top:600px;height:18px"></div>
<div class="m" style="top:620px;height:39px"></div>
<div class="m" style="top:661px;height:39px"></div>
<div class="m" style="top:702px;height:19px"></div>
<div class="m" style="top:723px;height:19px"></div>
<div class="m" style="top:744px;height:38px"></div>
<div class="m" style="top:784px;height:39px"></div>
<div class="m" style="top:825px;height:30px"></div>
<div class="m" style="top:858px;height:18px;background:#3a3a3a"></div>

<div class="a" style="left:1418px;top:878px;width:148px;height:22px;background:#2d2d2d"></div>
<div class="a" style="left:1422px;top:881px;width:15px;height:15px;background:#f0a860"></div>
<svg class="a" style="left:1423px;top:882px" width="13" height="13"><path d="M2 5 V8 M4 3 V10 M6.5 1.5 V11.5 M9 3 V10 M11 5 V8" stroke="#3a2410" stroke-width="1.1"/></svg>
<div class="a" style="left:1442px;top:881px;width:34px;height:15px;background:#1e1e1e;border:1px solid #111"></div>
<div class="a" style="left:1443px;top:882px;width:12px;height:14px;background:#2f6f86"></div>
<div class="a" style="left:1444px;top:882px;font-size:11.5px;color:#bbb">1.00x</div>
<div class="a" style="left:1504px;top:881px;width:15px;height:15px;background:#1e1e1e;color:#ccc;font-size:11px;text-align:center;line-height:15px">H</div>
<div class="a" style="left:1524px;top:881px;width:15px;height:15px;background:#1e1e1e;color:#ccc;font-size:11px;text-align:center;line-height:15px">W</div>

<div class="a" style="left:2px;top:18px;width:1562px;height:880px;border:2px solid #6a6a6a;border-top:none;border-radius:0 0 6px 6px;pointer-events:none"></div>
</div></body></html>
